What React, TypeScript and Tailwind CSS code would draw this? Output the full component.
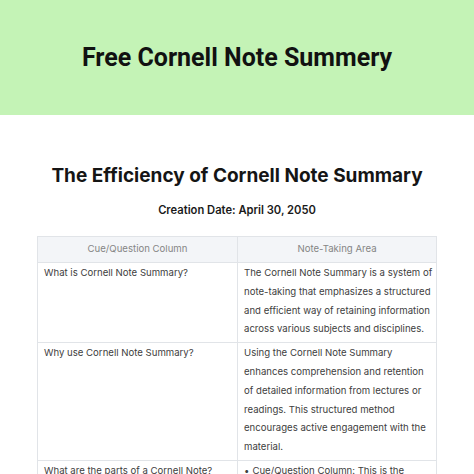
import React from "react";

export default function App() {
  const rows: { q: string; a: React.ReactNode }[] = [
    {
      q: "What is Cornell Note Summary?",
      a: "The Cornell Note Summary is a system of note-taking that emphasizes a structured and efficient way of retaining information across various subjects and disciplines.",
    },
    {
      q: "Why use Cornell Note Summary?",
      a: "Using the Cornell Note Summary enhances comprehension and retention of detailed information from lectures or readings. This structured method encourages active engagement with the material.",
    },
    {
      q: "What are the parts of a Cornell Note?",
      a: (
        <ul>
          <li className="flex gap-[3px]">
            <span>•</span>
            <span>Cue/Question Column: This is the narrow left column used for questions and keywords.</span>
          </li>
          <li className="flex gap-[3px]">
            <span>•</span>
            <span>Note-Taking Area: This is the wide right column.</span>
          </li>
        </ul>
      ),
    },
  ];
  return (
    <div className="w-[474px] h-[474px] overflow-hidden bg-white" style={{ fontFamily: "Inter, 'Liberation Sans', sans-serif" }}>
      <div className="h-[115px] bg-[#c4f3b6] flex items-center justify-center">
        <h1 className="text-[25px] font-bold text-[#111]" style={{ fontFamily: "Roboto, 'Liberation Sans', sans-serif" }}>
          Free Cornell Note Summery
        </h1>
      </div>
      <div className="pt-[46px] flex flex-col items-center">
        <h2 className="text-[19px] leading-[30px] font-bold text-[#151515]">The Efficiency of Cornell Note Summary</h2>
        <p className="mt-[11px] text-[11.2px] leading-[16px] font-semibold text-[#1a1a1a]">Creation Date: April 30, 2050</p>
      </div>
      <table className="mt-[18px] ml-[37px] w-[399px] table-fixed border-collapse text-[9.6px] text-[#404040]">
        <colgroup>
          <col className="w-[200px]" />
          <col className="w-[199px]" />
        </colgroup>
        <thead>
          <tr className="bg-[#f3f5f8]">
            <th className="border border-[#e1e4e8] h-[26px] p-0 font-normal text-[#858585] text-center">Cue/Question Column</th>
            <th className="border border-[#e1e4e8] h-[26px] p-0 font-normal text-[#858585] text-center">Note-Taking Area</th>
          </tr>
        </thead>
        <tbody>
          {rows.map((r, i) => (
            <tr key={i}>
              <td className="border border-[#e1e4e8] align-top pl-[6px] pr-[2px] pt-[1px] pb-[3px] leading-[18.8px]">{r.q}</td>
              <td className="border border-[#e1e4e8] align-top pl-[6px] pr-[1px] pt-[1px] pb-[3px] leading-[18.8px]">{r.a}</td>
            </tr>
          ))}
        </tbody>
      </table>
    </div>
  );
}
